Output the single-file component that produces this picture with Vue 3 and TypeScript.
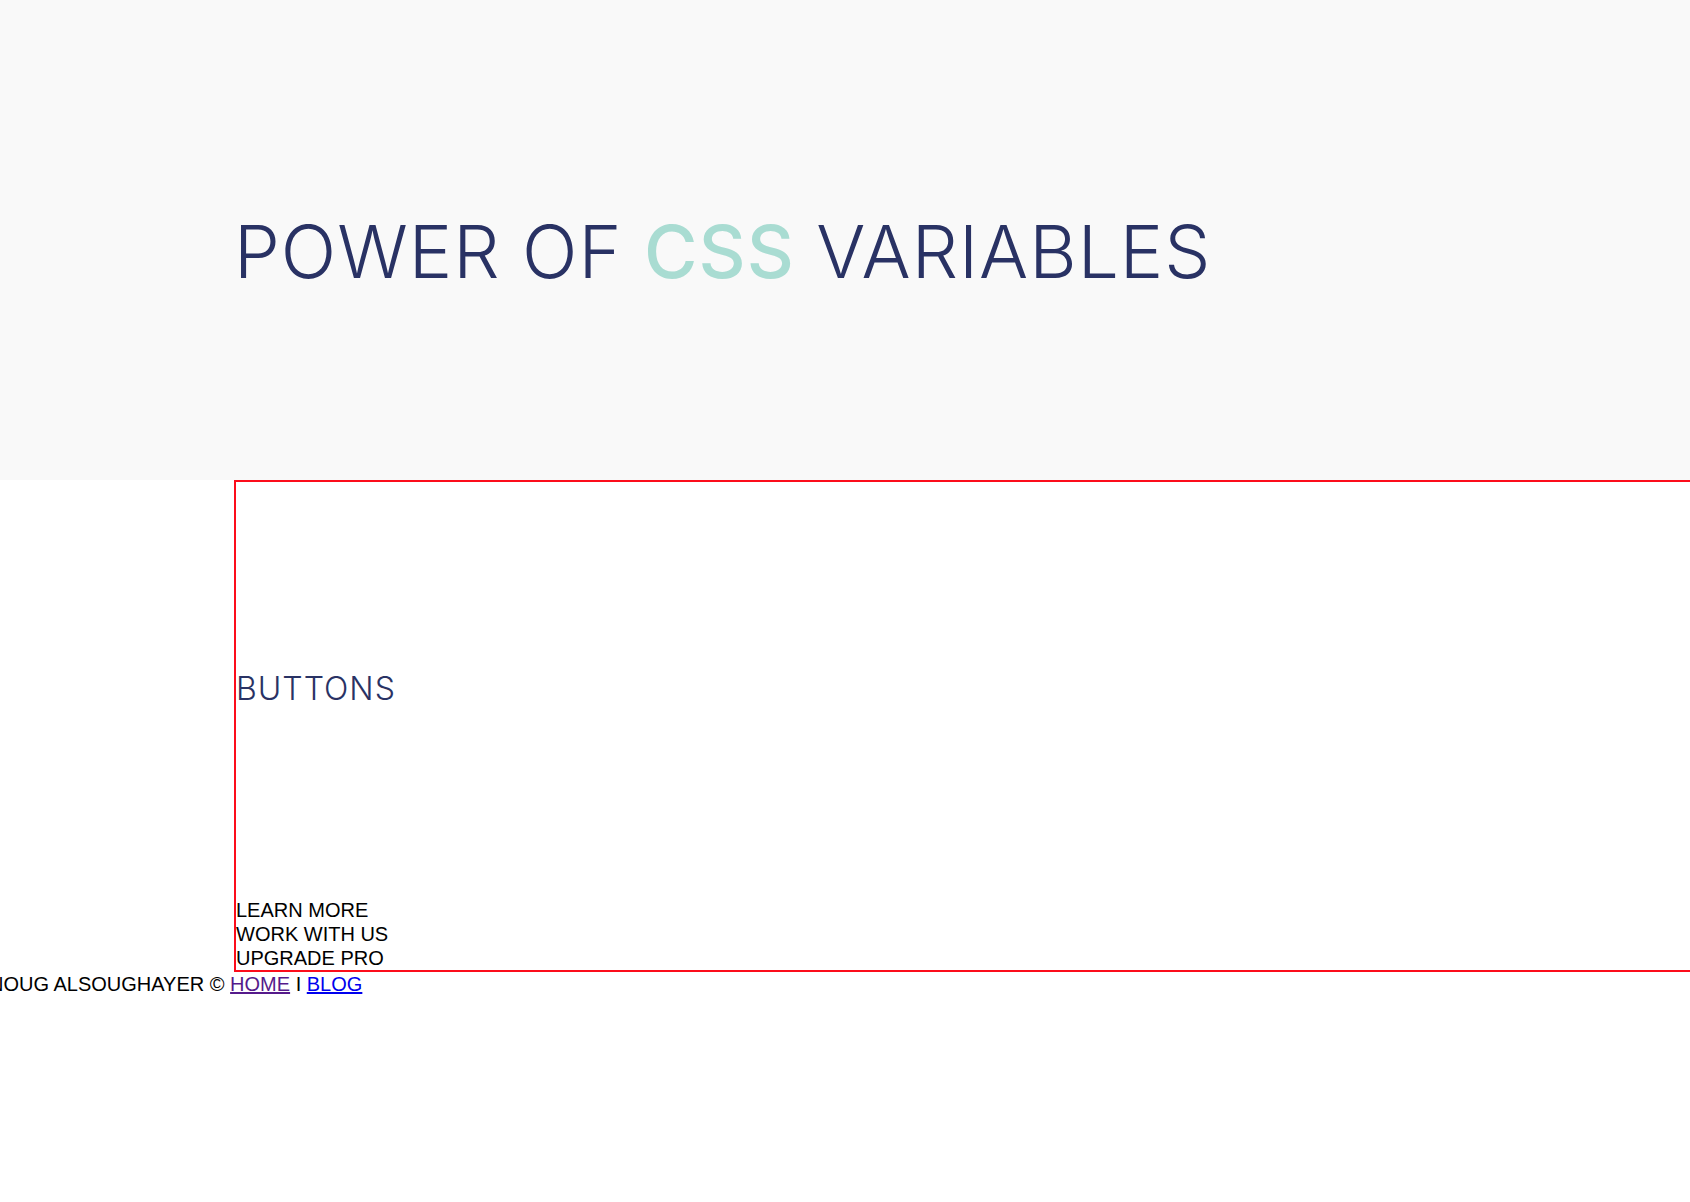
<script setup lang="ts">
const actions: string[] = ['Learn more', 'Work with us', 'Upgrade pro']
</script>

<template>
  <div class="page">
    <header class="hero">
      <h1 class="title">Power of <span class="accent">CSS</span> Variables</h1>
    </header>
    <main class="content">
      <h2 class="subtitle">Buttons</h2>
      <div v-for="action in actions" :key="action">{{ action }}</div>
    </main>
    <footer class="footer">
      Noug Alsoughayer © <a class="visited" href="#home">Home</a> I <a href="#blog">Blog</a>
    </footer>
  </div>
</template>

<style>
body {
  background: #fff;
}
</style>

<style scoped>
.page {
  --gutter: 234px;
  --primary: #293264;
  --accent: #a9dcd2;
  overflow-x: hidden;
  font-family: "Liberation Sans", Arial, sans-serif;
  font-size: 20px;
  line-height: 24px;
  text-transform: uppercase;
  color: #000;
}

.hero {
  padding: 204px 0 180px var(--gutter);
  background: #f9f9f9;
}

.title,
.subtitle {
  margin: 0;
  font-family: Inter, "Liberation Sans", sans-serif;
  font-weight: 300;
  letter-spacing: 1px;
  color: var(--primary);
}

.title {
  font-size: 73px;
  line-height: 96px;
}

.accent {
  font-weight: 500;
  color: var(--accent);
}

.content {
  margin-left: var(--gutter);
  border: 2px solid #fc0d1b;
  border-right: 0;
}

.subtitle {
  padding: 187px 0 189px;
  font-size: 32px;
  line-height: 40px;
}

.footer {
  margin-left: -11px;
  white-space: nowrap;
}

a {
  color: #0000ee;
}

.visited {
  color: #551a8b;
}
</style>
